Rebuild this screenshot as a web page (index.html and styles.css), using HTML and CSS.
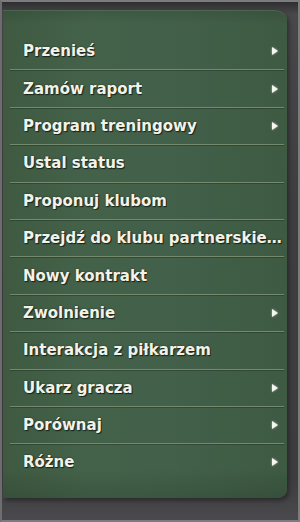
FILE: index.html
```html
<!DOCTYPE html>
<html>
<head>
<meta charset="utf-8">
<link rel="stylesheet" href="styles.css">
</head>
<body>
<div class="frame">
  <div class="panel">
    <ul class="menu">
      <li class="item sub"><span class="label">Przenieś</span></li>
      <li class="item sub"><span class="label">Zamów raport</span></li>
      <li class="item sub"><span class="label">Program treningowy</span></li>
      <li class="item"><span class="label">Ustal status</span></li>
      <li class="item"><span class="label">Proponuj klubom</span></li>
      <li class="item wide"><span class="label">Przejdź do klubu partnerskiego</span></li>
      <li class="item"><span class="label">Nowy kontrakt</span></li>
      <li class="item sub"><span class="label">Zwolnienie</span></li>
      <li class="item"><span class="label">Interakcja z piłkarzem</span></li>
      <li class="item sub"><span class="label">Ukarz gracza</span></li>
      <li class="item sub"><span class="label">Porównaj</span></li>
      <li class="item sub last"><span class="label">Różne</span></li>
    </ul>
  </div>
</div>
</body>
</html>
```
FILE: styles.css
```css
html, body {
  margin: 0;
  padding: 0;
  background: #3b3b3d;
}
.frame {
  box-sizing: border-box;
  width: 300px;
  height: 522px;
  border: 2px solid #7c7c7e;
  border-left-color: #6e6e70;
  background: linear-gradient(to bottom, #2e2e30 0px, #48484a 12px, #3e3e40 40%, #3d3d3f 92%, #4a4a4e 100%);
  padding: 8px 11px 22px 1px;
}
.panel {
  box-sizing: border-box;
  height: 100%;
  border-radius: 0 12px 10px 0 / 0 10px 8px 0;
  background:
    linear-gradient(to bottom, rgba(0,0,0,0.10) 0px, rgba(0,0,0,0) 14px, rgba(0,0,0,0) 94%, rgba(0,0,0,0.12) 100%),
    linear-gradient(to right, #3f5a41 0%, #44624a 30%, #42604a 60%, #3e5a42 100%);
  box-shadow: inset 0 1px 0 rgba(130,160,130,0.25), 2px 3px 4px rgba(0,0,0,0.35);
  padding-top: 23px;
}
.menu {
  list-style: none;
  margin: 0;
  padding: 0;
}
.item {
  display: flex;
  align-items: center;
  height: 36.4px;
  margin: 0 3px 0 7px;
  padding: 0 6px 0 13px;
  border-bottom: 1px solid #75896f;
  box-shadow: 0 1px 0 rgba(20,35,20,0.35);
  position: relative;
}
.item.wide {
  padding-right: 0;
}
.item.wide .label {
  margin-right: -3px;
}
.item.last {
  border-bottom: none;
  box-shadow: none;
}
.label {
  font-family: "DejaVu Sans", "Verdana", sans-serif;
  font-weight: bold;
  font-size: 15px;
  color: #f2f2e8;
  text-shadow: 1px 1px 1px #18241a, 0 0 2px rgba(0,0,0,0.5);
  white-space: nowrap;
  overflow: hidden;
  text-overflow: ellipsis;
  min-width: 0;
}
.item.sub::after {
  content: "";
  position: absolute;
  right: 6px;
  top: 50%;
  margin-top: -4px;
  width: 0;
  height: 0;
  border-top: 4px solid transparent;
  border-bottom: 4px solid transparent;
  border-left: 6px solid #f4f6ef;
  filter: drop-shadow(0 0 1px rgba(255,255,255,0.6));
}
```
